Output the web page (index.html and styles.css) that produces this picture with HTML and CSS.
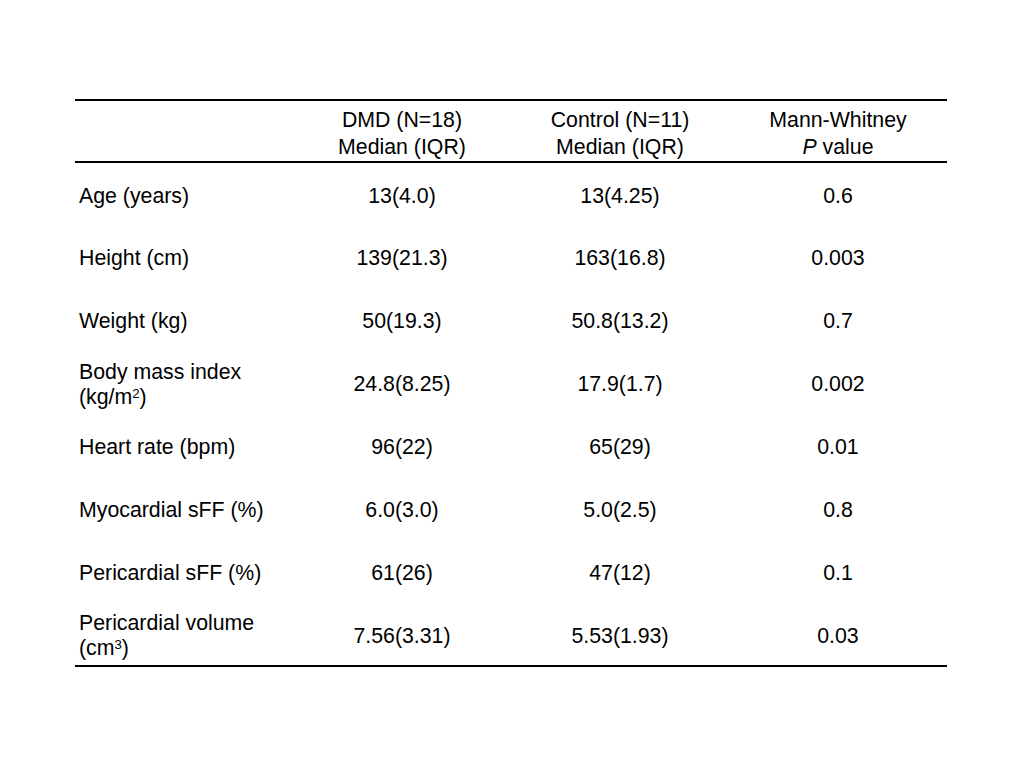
FILE: index.html
```html
<!DOCTYPE html>
<html>
<head>
<meta charset="utf-8">
<link rel="stylesheet" href="styles.css">
</head>
<body>
<table class="stats">
  <colgroup>
    <col class="c"><col class="c"><col class="c"><col class="c">
  </colgroup>
  <thead>
    <tr>
      <th class="label"></th>
      <th>DMD (N=18)<br>Median (IQR)</th>
      <th>Control (N=11)<br>Median (IQR)</th>
      <th>Mann-Whitney<br><i>P</i> value</th>
    </tr>
  </thead>
  <tbody>
    <tr><td class="label">Age (years)</td><td>13(4.0)</td><td>13(4.25)</td><td>0.6</td></tr>
    <tr><td class="label">Height (cm)</td><td>139(21.3)</td><td>163(16.8)</td><td>0.003</td></tr>
    <tr><td class="label">Weight (kg)</td><td>50(19.3)</td><td>50.8(13.2)</td><td>0.7</td></tr>
    <tr><td class="label">Body mass index<br>(kg/m<sup>2</sup>)</td><td>24.8(8.25)</td><td>17.9(1.7)</td><td>0.002</td></tr>
    <tr><td class="label">Heart rate (bpm)</td><td>96(22)</td><td>65(29)</td><td>0.01</td></tr>
    <tr><td class="label">Myocardial sFF (%)</td><td>6.0(3.0)</td><td>5.0(2.5)</td><td>0.8</td></tr>
    <tr><td class="label">Pericardial sFF (%)</td><td>61(26)</td><td>47(12)</td><td>0.1</td></tr>
    <tr><td class="label">Pericardial volume<br>(cm<sup>3</sup>)</td><td>7.56(3.31)</td><td>5.53(1.93)</td><td>0.03</td></tr>
  </tbody>
</table>
</body>
</html>
```
FILE: styles.css
```css
html, body {
  margin: 0;
  padding: 0;
  background: #fff;
}
body {
  font-family: "Liberation Sans", Arial, sans-serif;
  font-size: 21.3px;
  color: #000;
}
.stats {
  border-collapse: collapse;
  table-layout: fixed;
  width: 872px;
  margin: 99px 0 0 75px;
  border-top: 2px solid #000;
  border-bottom: 2px solid #000;
}
.stats .c {
  width: 218px;
}
.stats th, .stats td {
  padding: 0;
  text-align: center;
  vertical-align: middle;
  font-weight: normal;
}
.stats thead tr {
  height: 62px;
  border-bottom: 2px solid #000;
}
.stats th {
  line-height: 27px;
  padding-top: 6px;
}
.stats tbody tr {
  height: 63px;
}
.stats td {
  line-height: 25px;
  padding-top: 4px;
}
.stats .label {
  text-align: left;
  padding-left: 4px;
}
.stats sup {
  font-size: 0.62em;
  line-height: 0;
  vertical-align: 0.45em;
}
```
